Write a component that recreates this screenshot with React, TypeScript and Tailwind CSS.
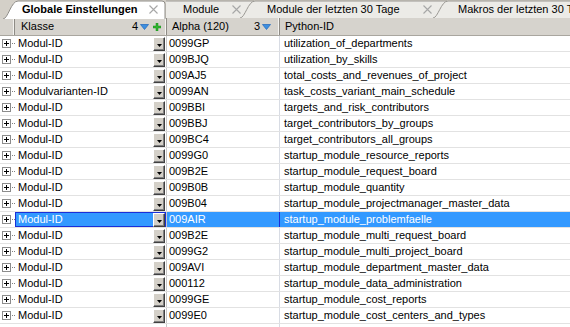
import React from "react";

type Row = { k: string; a: string; p: string };

const rows: Row[] = [
  { k: "Modul-ID", a: "0099GP", p: "utilization_of_departments" },
  { k: "Modul-ID", a: "009BJQ", p: "utilization_by_skills" },
  { k: "Modul-ID", a: "009AJ5", p: "total_costs_and_revenues_of_project" },
  { k: "Modulvarianten-ID", a: "0099AN", p: "task_costs_variant_main_schedule" },
  { k: "Modul-ID", a: "009BBI", p: "targets_and_risk_contributors" },
  { k: "Modul-ID", a: "009BBJ", p: "target_contributors_by_groups" },
  { k: "Modul-ID", a: "009BC4", p: "target_contributors_all_groups" },
  { k: "Modul-ID", a: "0099G0", p: "startup_module_resource_reports" },
  { k: "Modul-ID", a: "009B2E", p: "startup_module_request_board" },
  { k: "Modul-ID", a: "009B0B", p: "startup_module_quantity" },
  { k: "Modul-ID", a: "009B04", p: "startup_module_projectmanager_master_data" },
  { k: "Modul-ID", a: "009AIR", p: "startup_module_problemfaelle" },
  { k: "Modul-ID", a: "009B2E", p: "startup_module_multi_request_board" },
  { k: "Modul-ID", a: "0099G2", p: "startup_module_multi_project_board" },
  { k: "Modul-ID", a: "009AVI", p: "startup_module_department_master_data" },
  { k: "Modul-ID", a: "000112", p: "startup_module_data_administration" },
  { k: "Modul-ID", a: "0099GE", p: "startup_module_cost_reports" },
  { k: "Modul-ID", a: "0099E0", p: "startup_module_cost_centers_and_types" },
];

const SELECTED = 11;

function CloseX() {
  return (
    <svg width="9" height="9" viewBox="0 0 9 9" className="block">
      <path d="M0.5 0.5 L8.5 8.5 M8.5 0.5 L0.5 8.5" stroke="#a7a7a7" strokeWidth="1.1" />
    </svg>
  );
}

function InactiveTab({
  width,
  slant,
  label,
  textLeft,
  xLeft,
  grow,
}: {
  width?: number;
  slant: boolean;
  label: string;
  textLeft: number;
  xLeft?: number;
  grow?: boolean;
}) {
  const w = width ?? 160;
  const fillPath = slant
    ? `M0 18 C5 18 8 1 15 1 L${w + 200} 1 L${w + 200} 18 Z`
    : `M0 1 L${w + 200} 1 L${w + 200} 18 L0 18 Z`;
  const strokePath = slant
    ? `M0 18 C5 18 8 1 15 1 L${w + 200} 1`
    : `M0 1 L${w + 200} 1`;
  return (
    <div
      className={
        "relative h-[18px] shrink-0 overflow-hidden " + (grow ? "flex-1" : "")
      }
      style={grow ? undefined : { width: w }}
    >
      <svg className="absolute left-0 top-0" width={w + 200} height="18">
        <path d={fillPath} fill="#ecebe7" />
        <path d={strokePath} fill="none" stroke="#9a9893" strokeWidth="1" />
      </svg>
      <span
        className="absolute top-[3px] whitespace-nowrap leading-[13px] text-black"
        style={{ left: textLeft }}
      >
        {label}
      </span>
      {xLeft !== undefined && (
        <span className="absolute top-[5px]" style={{ left: xLeft }}>
          <CloseX />
        </span>
      )}
    </div>
  );
}

function TabStrip() {
  return (
    <div className="flex h-[18px] bg-[#d4d0c8] border-b border-[#c2bfb8] box-content -mb-px">
      <div className="w-[3px] shrink-0" />
      <div className="relative z-10 h-[19px] w-[163px] shrink-0">
        <svg className="absolute left-0 top-0" width="163" height="19">
          <path d="M0 19 C5 19 8 1 15 1 L159 1 Q162 1 162 4 L162 19 Z" fill="#ffffff" />
          <path d="M0 19 C5 19 8 1 15 1 L159 1 Q162 1 162 4 L162 19" fill="none" stroke="#8f8d88" strokeWidth="1" />
        </svg>
        <span className="absolute left-[19px] top-[3px] whitespace-nowrap font-bold leading-[13px] text-black">
          Globale Einstellungen
        </span>
        <span className="absolute left-[146px] top-[5px]">
          <CloseX />
        </span>
      </div>
      <InactiveTab width={88} slant={false} label="Module" textLeft={17} xLeft={66} />
      <div className="-ml-[14px] flex">
        <InactiveTab width={207} slant={true} label="Module der letzten 30 Tage" textLeft={27} xLeft={183} />
      </div>
      <div className="-ml-[14px] flex flex-1">
        <InactiveTab slant={true} grow label="Makros der letzten 30 Tage" textLeft={25} />
      </div>
    </div>
  );
}

function SortTri() {
  return (
    <svg width="9" height="6" viewBox="0 0 9 6" className="block">
      <path d="M0.5 0.5 L8.5 0.5 L4.5 5.5 Z" fill="#3d8fe0" stroke="#2a6fbf" strokeWidth="0.8" />
    </svg>
  );
}

function GreenPlus() {
  return (
    <svg width="8" height="8" viewBox="0 0 8 8" className="block">
      <path d="M3 0 H5 V3 H8 V5 H5 V8 H3 V5 H0 V3 H3 Z" fill="#2fb52f" stroke="#1d8a1d" strokeWidth="0.5" />
    </svg>
  );
}

const headSep =
  "border-r border-r-[#8e8b85] shadow-[inset_-1px_0_0_#f4f3f0]";

function Header() {
  return (
    <div className="grid h-[18px] grid-cols-[15px_152px_113px_290px] border-b border-b-[#a9a69f] bg-[#d6d3cd] leading-[17px]">
      <div className={headSep} />
      <div className={"flex items-center pl-[6px] pr-[5px] " + headSep}>
        <span>Klasse</span>
        <span className="ml-auto mr-[2px]">4</span>
        <SortTri />
        <span className="ml-[4px]">
          <GreenPlus />
        </span>
      </div>
      <div className={"flex items-center pl-[5px] pr-[8px] " + headSep}>
        <span>Alpha (120)</span>
        <span className="ml-auto mr-[2px]">3</span>
        <SortTri />
      </div>
      <div className="flex items-center pl-[5px]">
        <span>Python-ID</span>
      </div>
    </div>
  );
}

function Expander() {
  return (
    <div className="flex items-center pl-[2px]">
      <div className="flex h-[9px] w-[9px] items-center justify-center border border-[#8c8c8c] bg-white">
        <svg width="7" height="7" viewBox="0 0 7 7" className="block">
          <path d="M1 3.5 H6 M3.5 1 V6" stroke="#000" strokeWidth="1" />
        </svg>
      </div>
      <div className="ml-[1px] flex gap-[1px]">
        <span className="h-px w-px bg-[#808080]" />
        <span className="h-px w-px bg-[#808080]" />
      </div>
    </div>
  );
}

function DropBtn() {
  return (
    <div className="flex h-[14px] w-[12px] shrink-0 items-end justify-center border border-t-[#ffffff] border-l-[#ffffff] border-r-[#404040] border-b-[#404040] bg-[#d4d0c8] pb-[3px] shadow-[inset_-1px_-1px_0_#808080]">
      <svg width="5" height="3" viewBox="0 0 5 3" className="block">
        <path d="M0 0 H5 L2.5 3 Z" fill="#000" />
      </svg>
    </div>
  );
}

function DataRow({ r, sel }: { r: Row; sel: boolean }) {
  const bg = sel ? "bg-[#3399ff] text-white" : "bg-white";
  return (
    <div className="grid h-[16px] grid-cols-[15px_152px_113px_290px] border-b border-b-[#e2e2e2] leading-[15px]">
      <Expander />
      <div
        className={
          "flex items-center border-r border-r-[#c9c9c9] pl-[3px] pr-[1px] " +
          (sel ? "bg-[#3399ff] text-white shadow-[inset_0_0_0_1px_#1a2fd8]" : "bg-white")
        }
      >
        <span className="flex-1 whitespace-nowrap">{r.k}</span>
        <DropBtn />
      </div>
      <div
        className={
          "flex items-center pl-[2px] border-r " +
          (sel ? "border-r-[#1a2fd8] " : "border-r-[#d8dce4] ") +
          bg
        }
      >
        <span className="whitespace-nowrap">{r.a}</span>
      </div>
      <div className={"flex items-center pl-[4px] " + bg}>
        <span className="whitespace-nowrap">{r.p}</span>
      </div>
    </div>
  );
}

export default function App() {
  return (
    <div className="h-[327px] w-[570px] overflow-hidden bg-white font-['Liberation_Sans',Arial,sans-serif] text-[11px] text-black">
      <TabStrip />
      <Header />
      {rows.map((r, i) => (
        <DataRow key={i} r={r} sel={i === SELECTED} />
      ))}
      <div className="grid h-[16px] grid-cols-[15px_152px_113px_290px]">
        <div />
        <div className="border-r border-r-[#c9c9c9]" />
        <div className="border-r border-r-[#d8dce4]" />
        <div />
      </div>
    </div>
  );
}
